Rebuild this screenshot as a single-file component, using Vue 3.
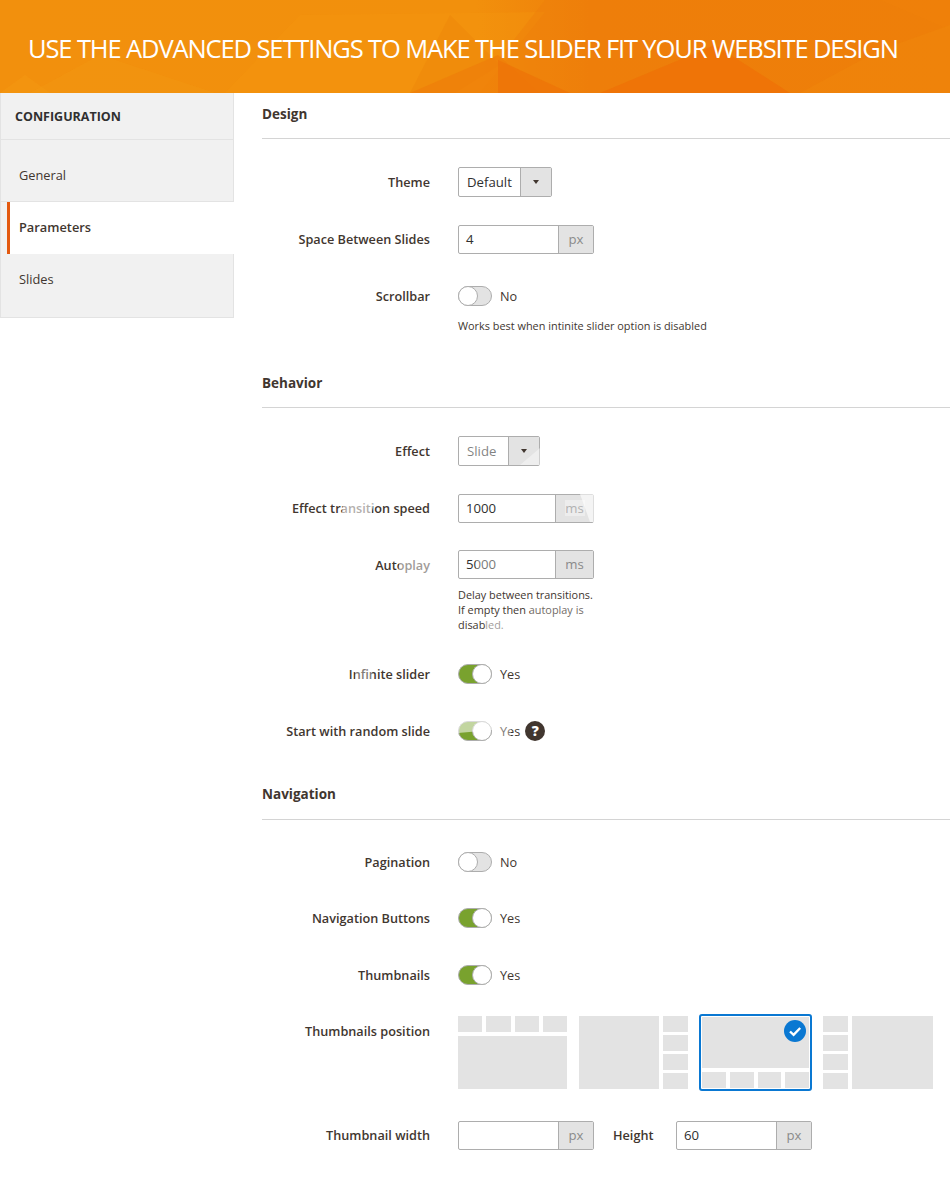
<script setup>
const tabs = [
  { name: 'General', cls: 'first' },
  { name: 'Parameters', cls: 'active' },
  { name: 'Slides', cls: 'last' }
]
const cells = [1, 2, 3, 4]
</script>

<template>
  <div class="page">
    <header class="banner">
      <svg class="banner-bg" viewBox="0 0 950 93" preserveAspectRatio="none">
        <polygon points="0,93 25,75 50,93" fill="#f49a14" opacity="0.4" />
        <polygon points="30,93 100,55 215,93" fill="#f49a14" opacity="0.35" />
        <polygon points="225,93 300,15 545,12 480,93" fill="#f4960f" opacity="0.4" />
        <polygon points="450,15 500,65 455,93 410,93" fill="#ee8609" opacity="0.5" />
        <polygon points="545,0 880,0 950,30 950,93 498,93 498,60" fill="#ee7f0a" opacity="0.45" />
        <polygon points="498,55 540,93 410,93" fill="#ee7c0a" opacity="0.6" />
        <polygon points="498,60 570,93 498,93" fill="#ee7408" opacity="0.8" />
        <polygon points="600,93 715,45 790,93" fill="#ee7207" opacity="0.85" />
        <polygon points="800,93 950,93 950,25 880,50" fill="#f18a0c" opacity="0.4" />
      </svg>
      <h1>USE THE ADVANCED SETTINGS TO MAKE THE SLIDER FIT YOUR WEBSITE DESIGN</h1>
    </header>

    <div class="content">
      <aside class="sidebar">
        <div class="side-title">CONFIGURATION</div>
        <a v-for="tab in tabs" :key="tab.name" :class="['tab', tab.cls]">{{ tab.name }}</a>
      </aside>

      <main class="main">
        <section class="section">
          <h2>Design</h2>
          <div class="rows">
            <div class="row">
              <label>Theme</label>
              <div class="select theme">
                <span class="select-value">Default</span>
                <span class="select-btn"><i class="caret"></i></span>
              </div>
            </div>
            <div class="row">
              <label>Space Between Slides</label>
              <div class="input-group">
                <span class="input-value">4</span>
                <span class="addon">px</span>
              </div>
            </div>
            <div class="row with-note">
              <label>Scrollbar</label>
              <div class="control">
                <div class="switch-line">
                  <span class="toggle"><i class="knob"></i></span>
                  <span class="state">No</span>
                </div>
                <p class="note">Works best when intinite slider option is disabled</p>
              </div>
            </div>
          </div>
        </section>

        <section class="section behavior">
          <h2>Behavior</h2>
          <div class="rows">
            <div class="row">
              <label>Effect</label>
              <div class="select effect">
                <span class="select-value">Slide</span>
                <span class="select-btn"><i class="caret"></i></span>
              </div>
            </div>
            <div class="row">
              <label>Effect transition speed</label>
              <div class="input-group">
                <span class="input-value">1000</span>
                <span class="addon ms">ms</span>
              </div>
            </div>
            <div class="row with-note">
              <label>Autoplay</label>
              <div class="control">
                <div class="input-group">
                  <span class="input-value">5000</span>
                  <span class="addon ms">ms</span>
                </div>
                <p class="note narrow">Delay between transitions. If empty then autoplay is disabled.</p>
              </div>
            </div>
            <div class="row">
              <label>Infinite slider</label>
              <div class="switch-line">
                <span class="toggle on"><i class="knob"></i></span>
                <span class="state">Yes</span>
              </div>
            </div>
            <div class="row">
              <label>Start with random slide</label>
              <div class="switch-line">
                <span class="toggle on"><i class="knob"></i></span>
                <span class="state">Yes</span>
                <span class="help">?</span>
              </div>
            </div>
          </div>
        </section>

        <section class="section navigation">
          <h2>Navigation</h2>
          <div class="rows">
            <div class="row">
              <label>Pagination</label>
              <div class="switch-line">
                <span class="toggle"><i class="knob"></i></span>
                <span class="state">No</span>
              </div>
            </div>
            <div class="row">
              <label>Navigation Buttons</label>
              <div class="switch-line">
                <span class="toggle on"><i class="knob"></i></span>
                <span class="state">Yes</span>
              </div>
            </div>
            <div class="row nudge">
              <label>Thumbnails</label>
              <div class="switch-line">
                <span class="toggle on"><i class="knob"></i></span>
                <span class="state">Yes</span>
              </div>
            </div>
            <div class="row thumbs-row nudge">
              <label>Thumbnails position</label>
              <div class="thumbs">
                <div class="thumb t-top">
                  <div class="cells"><i v-for="c in cells" :key="c"></i></div>
                  <div class="big"></div>
                </div>
                <div class="thumb t-right">
                  <div class="big"></div>
                  <div class="cells"><i v-for="c in cells" :key="c"></i></div>
                </div>
                <div class="thumb t-bottom">
                  <div class="big"></div>
                  <div class="cells"><i v-for="c in cells" :key="c"></i></div>
                  <svg class="check" viewBox="0 0 22 22">
                    <circle cx="11" cy="11" r="11" fill="#0a78d2" />
                    <path d="M6 11.5l3.6 3.4L16.2 8" fill="none" stroke="#fff" stroke-width="2.4" />
                  </svg>
                </div>
                <div class="thumb t-left">
                  <div class="cells"><i v-for="c in cells" :key="c"></i></div>
                  <div class="big"></div>
                </div>
              </div>
            </div>
            <div class="row size-row">
              <label>Thumbnail width</label>
              <div class="input-group">
                <span class="input-value"></span>
                <span class="addon">px</span>
              </div>
              <span class="inline-label">Height</span>
              <div class="input-group">
                <span class="input-value">60</span>
                <span class="addon">px</span>
              </div>
            </div>
          </div>
        </section>
      </main>
    </div>

    <!-- patchy watermark from the source image, washes over the behavior rows -->
    <svg class="watermark" viewBox="0 0 950 1184">
      <g fill="#fff">
        <polygon points="459,437 505,437 498,465 459,465" opacity="0.4" />
        <polygon points="520,465 540,448 540,465" opacity="0.4" />
        <polygon points="345,498 375,498 370,520 340,520" opacity="0.6" />
        <polygon points="565,500 585,500 585,516 565,516" opacity="0.35" />
        <polygon points="580,494 596,494 596,522 590,522" opacity="0.6" />
        <polygon points="400,555 432,555 432,575 398,575" opacity="0.5" />
        <polygon points="476,556 500,556 500,574 476,574" opacity="0.35" />
        <polygon points="530,603 600,603 600,617 530,617" opacity="0.25" />
        <polygon points="486,618 505,618 505,632 486,632" opacity="0.5" />
        <polygon points="355,667 372,667 372,682 355,682" opacity="0.35" />
        <polygon points="458,720 492,720 492,730 458,733" opacity="0.55" />
        <polygon points="500,723 511,723 511,738 500,738" opacity="0.35" />
      </g>
    </svg>
  </div>
</template>

<style scoped>
.page {
  position: relative;
  width: 950px;
  min-height: 1184px;
  overflow: hidden;
  background: #fff;
  color: #303030;
  font-family: "Open Sans", "Liberation Sans", sans-serif;
}

/* Banner */
.banner {
  position: relative;
  height: 93px;
  display: flex;
  align-items: center;
  padding: 0 0 0 28px;
  box-sizing: border-box;
  background: linear-gradient(90deg, #f2900d 0%, #f2900c 50%, #ef7f0a 62%, #ef8009 100%);
}

.banner-bg {
  position: absolute;
  inset: 0;
  width: 100%;
  height: 100%;
}

.banner h1 {
  position: relative;
  margin: 4px 0 0;
  color: #fff;
  font-size: 25.5px;
  font-weight: 400;
  line-height: 1;
  letter-spacing: -1.12px;
  white-space: nowrap;
}

/* Sidebar */
.content {
  position: relative;
  display: flex;
  align-items: flex-start;
}

.sidebar {
  width: 234px;
  flex-shrink: 0;
  background: #f1f1f1;
  border-right: 1px solid #e3e3e3;
  border-bottom: 1px solid #e3e3e3;
  border-left: 1px solid #e3e3e3;
  box-sizing: border-box;
}

.side-title {
  height: 47px;
  padding-left: 14px;
  box-sizing: border-box;
  border-bottom: 1px solid #e3e3e3;
  font-size: 12.5px;
  font-weight: 700;
  line-height: 48px;
  color: #303030;
}

.tab {
  display: block;
  padding-left: 18px;
  font-size: 12.8px;
  color: #41362f;
}

.tab.first {
  height: 62px;
  line-height: 70px;
  border-bottom: 1px solid #e3e3e3;
  box-sizing: border-box;
}

.tab.active {
  position: relative;
  height: 52px;
  line-height: 51px;
  margin: 0 -1px 0 6px;
  padding-left: 9px;
  background: #fff;
  border-left: 3px solid #e3590f;
  font-weight: 600;
}

.tab.last {
  height: 63px;
  line-height: 51px;
}

/* Main column */
.main {
  flex: 1;
  padding-left: 28px;
}

.section h2 {
  margin: 0;
  height: 46px;
  box-sizing: border-box;
  border-bottom: 1px solid #d4d4d4;
  font-size: 13.5px;
  font-weight: 700;
  line-height: 43px;
  color: #41362f;
}

.behavior {
  margin-top: 28px;
}

.behavior h2 {
  height: 47px;
  line-height: 44px;
}

.navigation {
  margin-top: 25px;
}

.navigation h2 {
  height: 49px;
  line-height: 46px;
}

.rows {
  display: flex;
  flex-direction: column;
  gap: 27px;
  padding-top: 28px;
}

.navigation .rows {
  gap: 26px;
  padding-top: 27px;
}

.nudge {
  margin-top: 1px;
}

.row {
  display: flex;
  align-items: center;
  min-height: 30px;
}

.row label {
  width: 168px;
  margin-right: 28px;
  flex-shrink: 0;
  text-align: right;
  font-size: 12.7px;
  font-weight: 600;
  color: #41362f;
}

.row.with-note,
.row.thumbs-row {
  align-items: flex-start;
}

.row.with-note label {
  line-height: 30px;
}

.thumbs-row label {
  line-height: 28px;
}

/* Select and inputs */
.select {
  display: flex;
  height: 30px;
  box-sizing: border-box;
  border: 1px solid #adadad;
  border-radius: 2px;
  font-size: 13.2px;
  background: #fff;
}

.theme {
  width: 94px;
}

.effect {
  width: 82px;
}

.select-value {
  flex: 1;
  padding-left: 8px;
  line-height: 28px;
}

.select-btn {
  width: 30px;
  flex-shrink: 0;
  display: flex;
  align-items: center;
  justify-content: center;
  background: #e3e3e3;
  border-left: 1px solid #adadad;
}

.caret {
  width: 0;
  height: 0;
  border-left: 3.5px solid transparent;
  border-right: 3.5px solid transparent;
  border-top: 4px solid #41362f;
}

.input-group {
  display: flex;
  width: 136px;
  height: 29px;
  box-sizing: border-box;
  border: 1px solid #adadad;
  border-radius: 2px;
  background: #fff;
  font-size: 13.2px;
}

.input-value {
  flex: 1;
  padding-left: 7px;
  line-height: 27px;
}

.addon {
  width: 34px;
  flex-shrink: 0;
  text-align: center;
  line-height: 27px;
  color: #8a8a8a;
  background: #e3e3e3;
  border-left: 1px solid #adadad;
}

.addon.ms {
  width: 37px;
}

/* Toggles */
.switch-line {
  display: flex;
  align-items: center;
  height: 30px;
}

.toggle {
  position: relative;
  width: 34px;
  height: 20px;
  box-sizing: border-box;
  border: 1px solid #adadad;
  border-radius: 10px;
  background: #e3e3e3;
}

.toggle.on {
  background: #79a22e;
}

.knob {
  position: absolute;
  top: -1px;
  left: -1px;
  width: 20px;
  height: 20px;
  box-sizing: border-box;
  border: 1px solid #adadad;
  border-radius: 50%;
  background: #fff;
}

.toggle.on .knob {
  left: auto;
  right: -1px;
}

.state {
  margin-left: 8px;
  font-size: 12.7px;
  color: #41362f;
}

.help {
  width: 20px;
  height: 20px;
  margin-left: 5px;
  border-radius: 50%;
  background: #41362f;
  color: #fff;
  font-size: 14px;
  font-weight: 800;
  line-height: 20px;
  text-align: center;
}

.note {
  margin: 7px 0 0;
  font-size: 10.9px;
  line-height: 15px;
  color: #41362f;
}

.note.narrow {
  width: 140px;
  margin-top: 8px;
}

/* Thumbnail position picker */
.thumbs {
  display: flex;
  align-items: flex-start;
  margin-top: -1px;
}

.thumb {
  display: flex;
  gap: 4px;
  height: 73px;
}

.thumb .big {
  background: #e3e3e3;
  flex: 1;
}

.thumb .cells {
  display: flex;
  gap: 4px;
}

.thumb .cells i {
  flex: 1;
  background: #e3e3e3;
}

.t-top {
  flex-direction: column;
  width: 109px;
  margin-right: 12px;
}

.t-top .cells {
  height: 16px;
}

.t-right {
  width: 109px;
  margin-right: 11px;
}

.t-right .cells,
.t-left .cells {
  width: 25px;
  flex-direction: column;
  gap: 3px;
}

.t-bottom {
  position: relative;
  flex-direction: column;
  width: 113px;
  height: 77px;
  margin: -2px 11px 0 0;
  box-sizing: border-box;
  padding: 1px;
  border: 2px solid #0a78d2;
  border-radius: 3px;
}

.t-bottom .cells {
  height: 16px;
}

.check {
  position: absolute;
  top: 4px;
  right: 4px;
  width: 22px;
  height: 22px;
}

.t-left {
  width: 110px;
}

.size-row {
  margin-top: 3px;
}

.inline-label {
  width: 82px;
  padding-left: 19px;
  box-sizing: border-box;
  font-size: 12.7px;
  font-weight: 600;
  color: #41362f;
}

.watermark {
  position: absolute;
  inset: 0;
  width: 950px;
  height: 1184px;
  pointer-events: none;
}
</style>
